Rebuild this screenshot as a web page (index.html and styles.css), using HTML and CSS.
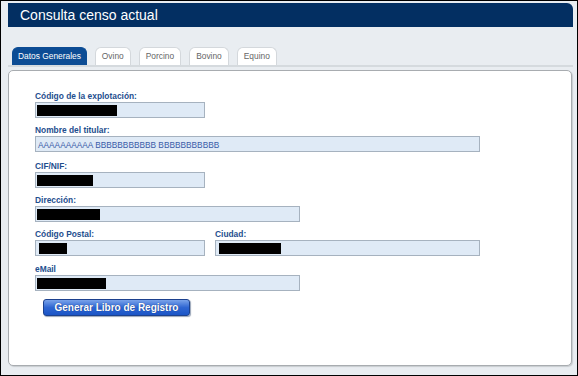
FILE: index.html
```html
<!DOCTYPE html>
<html lang="es">
<head>
    <meta charset="UTF-8">
    <title>Consulta censo actual</title>
    <link rel="stylesheet" href="styles.css">
</head>
<body>
    <div class="page">
        <header class="title-bar">
            <h1>Consulta censo actual</h1>
        </header>
        <nav class="tabs">
            <span class="tab active">Datos Generales</span>
            <span class="tab">Ovino</span>
            <span class="tab">Porcino</span>
            <span class="tab">Bovino</span>
            <span class="tab">Equino</span>
        </nav>
        <main class="panel">
            <div class="field">
                <label>Código de la explotación:</label>
                <div class="input short"><span class="redact" style="width: 80px;"></span></div>
            </div>
            <div class="field">
                <label>Nombre del titular:</label>
                <div class="input long">AAAAAAAAAA BBBBBBBBBBB BBBBBBBBBBB</div>
            </div>
            <div class="field spaced">
                <label>CIF/NIF:</label>
                <div class="input short"><span class="redact" style="width: 56px;"></span></div>
            </div>
            <div class="field">
                <label>Dirección:</label>
                <div class="input medium"><span class="redact" style="width: 63px;"></span></div>
            </div>
            <div class="field-row">
                <div class="field">
                    <label>Código Postal:</label>
                    <div class="input short"><span class="redact pad" style="width: 28px;"></span></div>
                </div>
                <div class="field">
                    <label>Ciudad:</label>
                    <div class="input city"><span class="redact pad" style="width: 62px;"></span></div>
                </div>
            </div>
            <div class="field spaced-sm">
                <label>eMail</label>
                <div class="input medium"><span class="redact" style="width: 69px;"></span></div>
            </div>
            <button type="button" class="btn">Generar Libro de Registro</button>
        </main>
    </div>
</body>
</html>
```
FILE: styles.css
```css
/* Consulta censo */
html, body {
    margin: 0;
    padding: 0;
}

body {
    width: 578px;
    height: 376px;
    box-sizing: border-box;
    border: 1px solid #000;
    background-color: #e9edf1;
    font-family: "Liberation Sans", Arial, sans-serif;
    overflow: hidden;
}

.page {
    padding: 2px 4px 0 7px;
    display: flex;
    flex-direction: column;
}

.title-bar {
    height: 24px;
    background-color: #032f62;
    border-top-right-radius: 6px;
    display: flex;
    align-items: center;
    padding-left: 12px;
}

h1 {
    margin: 0;
    color: #fff;
    font-size: 14px;
    font-weight: normal;
}

.tabs {
    margin-top: 20px;
    padding-left: 4px;
    display: flex;
    align-items: flex-end;
    gap: 8px;
    border-bottom: 2px solid #d5dade;
}

.tab {
    height: 17px;
    line-height: 17px;
    padding: 0 6px;
    font-size: 8.4px;
    color: #666;
    background-color: #fff;
    border: 1px solid #d4d8dc;
    border-bottom: none;
    border-radius: 6px 6px 0 0;
}

.tab.active {
    background-color: #0c4c94;
    border-color: #0c4c94;
    color: #fff;
    padding: 0 5px;
}

.panel {
    margin: 3px 1px 0 0;
    height: 296px;
    background-color: #fff;
    border: 1px solid #a8acb0;
    border-radius: 5px;
    box-shadow: 1px 1px 1px #c8ccd0;
    padding: 19px 0 0 26px;
    box-sizing: border-box;
}

.field {
    margin-bottom: 6px;
}

.field.spaced {
    padding-top: 2px;
}

.field.spaced-sm {
    padding-top: 1px;
}

.field label {
    display: block;
    height: 12px;
    line-height: 12px;
    font-size: 8.4px;
    font-weight: bold;
    color: #1e4e8e;
}

.field-row {
    display: flex;
    gap: 10px;
}

.input {
    height: 16px;
    box-sizing: border-box;
    background-color: #dfeaf6;
    border: 1px solid #a6b2bf;
    padding: 1px 0 0 2px;
    font-size: 8.3px;
    line-height: 12px;
    color: #3a5ca8;
    display: flex;
    align-items: center;
}

.input.short {
    width: 170px;
}

.input.medium {
    width: 265px;
}

.input.long {
    width: 445px;
}

.input.city {
    width: 265px;
}

.redact {
    display: block;
    height: 11px;
    background-color: #000;
    margin-left: -1px;
}

.redact.pad {
    margin-left: 1px;
}

.btn {
    margin: 2px 0 0 8px;
    width: 147px;
    height: 17px;
    padding: 0;
    border: 1px solid #1c418e;
    border-radius: 3px;
    background: linear-gradient(#7aa3ea, #2f66d2 50%, #1b55c6);
    color: #fff;
    font-family: "Liberation Sans", Arial, sans-serif;
    font-size: 10px;
    font-weight: bold;
    text-shadow: 0 0 1px #0c2e70;
    box-shadow: 1px 1px 1px #9aa6b8;
}
```
